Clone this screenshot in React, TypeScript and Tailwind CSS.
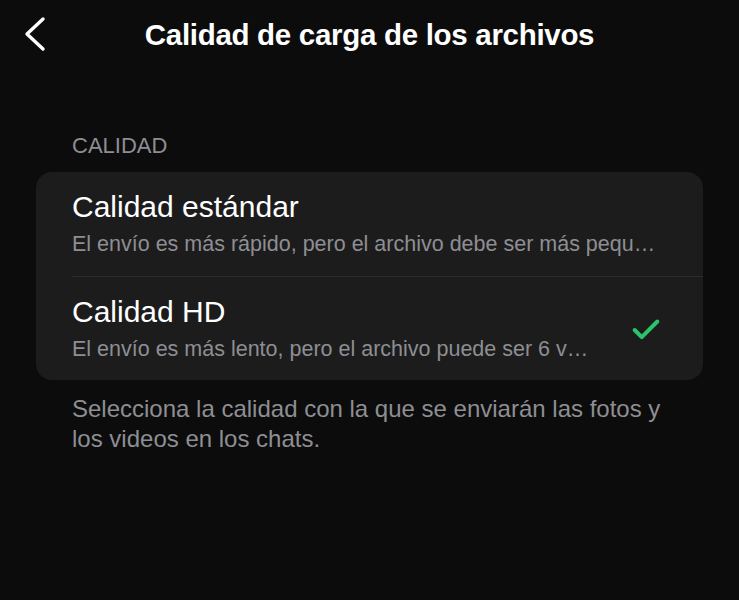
import { Check } from "lucide-react"

const options = [
  {
    title: "Calidad estándar",
    desc: "El envío es más rápido, pero el archivo debe ser más pequeño y la calidad es menor.",
    selected: false,
  },
  {
    title: "Calidad HD",
    desc: "El envío es más lento, pero el archivo puede ser 6 veces más grande.",
    selected: true,
  },
]

export default function App() {
  return (
    <div className="min-h-[600px] w-full bg-[#0c0c0c] text-white font-['Liberation_Sans',Arial,sans-serif]">
      <div className="relative flex h-[70px] items-center justify-center">
        <svg className="absolute left-[20px] top-[15px] h-[38px] w-[30px]" viewBox="0 0 30 38" fill="none">
          <path d="M23 4 L7 19 L23 34" stroke="white" strokeWidth="3.4" strokeLinecap="round" strokeLinejoin="round" />
        </svg>
        <h1 className="text-[29.5px] font-bold tracking-[-0.3px]">Calidad de carga de los archivos</h1>
      </div>

      <div className="px-9 pt-[64px]">
        <p className="pl-9 text-[22px] leading-6 text-[#8e8e93]">CALIDAD</p>

        <div className="mt-[14px] rounded-2xl bg-[#1c1c1d]">
          {options.map((o, i) => (
            <div key={o.title} className="flex items-center pl-9">
              <div className={`flex h-[104px] min-w-0 flex-1 items-center ${i > 0 ? "border-t border-[#2c2c2e]" : ""}`}>
                <div className="min-w-0 flex-1 pr-10">
                  <p className="text-[30px] leading-8">{o.title}</p>
                  <p className="mt-[8px] truncate text-[21.5px] leading-[26px] text-[#8e8e93]">{o.desc}</p>
                </div>
                {o.selected && (
                  <Check className="mr-[40px] mt-[2px] h-[34px] w-[34px] shrink-0 text-[#2ac56a]" strokeWidth={2.8} />
                )}
              </div>
            </div>
          ))}
        </div>

        <p className="mt-[14px] max-w-[660px] pl-9 text-[24px] leading-[30px] text-[#8e8e93]">
          Selecciona la calidad con la que se enviarán las fotos y los videos en los chats.
        </p>
      </div>
    </div>
  )
}
